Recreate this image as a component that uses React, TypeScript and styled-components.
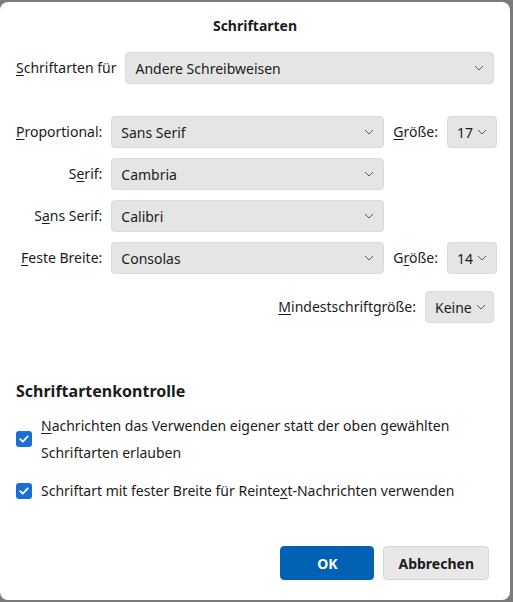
import * as React from 'react';
import styled, { createGlobalStyle } from 'styled-components';

const GlobalStyle = createGlobalStyle`
	html, body {
		margin: 0;
		padding: 0;
		background: #7b7b7b;
	}
	body {
		font-family: 'Noto Sans', 'Open Sans', sans-serif;
		color: #1b1b1b;
	}
`;

let Dialog = styled.div`
	box-sizing: border-box;
	width: 510px;
	height: 598px;
	margin: 2px 3px 2px 0;
	background: #ffffff;
	border-radius: 8px;
	padding: 0 16px 0 16px;
	display: flex;
	flex-direction: column;
	font-size: 14px;
`;
let Title = styled.h1`
	margin: 0;
	padding: 14px 0 0;
	height: 38px;
	box-sizing: border-box;
	text-align: center;
	font-size: 14px;
	font-weight: 700;
	line-height: 20px;
`;
let TopRow = styled.div`
	margin-top: 12px;
	display: flex;
	align-items: center;
	gap: 9px;
`;
let FontGrid = styled.div`
	margin-top: 32px;
	display: grid;
	grid-template-columns: auto 273px auto 1fr;
	column-gap: 9px;
	row-gap: 10px;
	align-items: center;
`;
let Label = styled.label<{ $right?: boolean }>`
	white-space: nowrap;
	text-align: ${(p) => (p.$right ? 'right' : 'left')};
	line-height: 20px;
	& u {
		text-decoration-thickness: 1px;
		text-underline-offset: 2px;
	}
`;
let Select = styled.div<{ $width?: number; $grow?: boolean }>`
	box-sizing: border-box;
	height: 32px;
	${(p) => (p.$width ? `width: ${p.$width}px;` : '')}
	${(p) => (p.$grow ? 'flex: 1;' : '')}
	background: #e5e5e5;
	border: 1px solid #dadada;
	border-radius: 4px;
	display: flex;
	align-items: center;
	justify-content: space-between;
	padding: 0 9px 0 9px;
	white-space: nowrap;
	& svg {
		flex-shrink: 0;
		margin-left: 4px;
	}
`;
let MinRow = styled.div`
	margin-top: 17px;
	display: flex;
	justify-content: flex-end;
	align-items: center;
	gap: 9px;
`;
let Heading = styled.h2`
	margin: 57px 0 0;
	font-size: 16px;
	font-weight: 700;
	line-height: 22px;
`;
let CheckRow = styled.div`
	margin-top: 10px;
	display: flex;
	align-items: center;
	gap: 9px;
	& ${Label} {
		line-height: 27px;
	}
	& + & {
		margin-top: 11px;
	}
`;
let Box = styled.span`
	flex-shrink: 0;
	width: 16px;
	height: 16px;
	border-radius: 3px;
	background: #1a6fd6;
	display: flex;
	align-items: center;
	justify-content: center;
`;
let Footer = styled.div`
	margin-top: auto;
	margin-bottom: 20px;
	display: flex;
	justify-content: flex-end;
	gap: 9px;
	padding-right: 5px;
`;
let Button = styled.button<{ $primary?: boolean }>`
	box-sizing: border-box;
	height: 34px;
	min-width: 94px;
	padding: 0 14px;
	border-radius: 4px;
	font-family: inherit;
	font-size: 14px;
	font-weight: 700;
	border: 1px solid ${(p) => (p.$primary ? '#0061b5' : '#d3d3d3')};
	background: ${(p) => (p.$primary ? '#0061b5' : '#e8e8e8')};
	color: ${(p) => (p.$primary ? '#ffffff' : '#1b1b1b')};
`;

const Chevron = () => (
	<svg width="10" height="6" viewBox="0 0 10 6">
		<path d="M1 1 L5 5 L9 1" fill="none" stroke="#5b5b5b" strokeWidth="1" />
	</svg>
);

const Check = () => (
	<svg width="12" height="12" viewBox="0 0 12 12">
		<path
			d="M2.2 6.2 L4.8 8.7 L9.8 3.4"
			fill="none"
			stroke="#ffffff"
			strokeWidth="1.8"
			strokeLinecap="round"
			strokeLinejoin="round"
		/>
	</svg>
);

const FontSelect: React.FunctionComponent<{
	value: string;
	width?: number;
	grow?: boolean;
}> = ({ value, width, grow }) => (
	<Select $width={width} $grow={grow}>
		<span>{value}</span>
		<Chevron />
	</Select>
);

const App: React.FunctionComponent = () => {
	return (
		<>
			<GlobalStyle />
			<Dialog>
				<Title>Schriftarten</Title>
				<TopRow>
					<Label>
						<u>S</u>chriftarten für
					</Label>
					<FontSelect value="Andere Schreibweisen" grow />
				</TopRow>

				<FontGrid>
					<Label $right>
						<u>P</u>roportional:
					</Label>
					<FontSelect value="Sans Serif" />
					<Label>
						<u>G</u>röße:
					</Label>
					<FontSelect value="17" />

					<Label $right>
						S<u>e</u>rif:
					</Label>
					<FontSelect value="Cambria" />
					<span />
					<span />

					<Label $right>
						S<u>a</u>ns Serif:
					</Label>
					<FontSelect value="Calibri" />
					<span />
					<span />

					<Label $right>
						<u>F</u>este Breite:
					</Label>
					<FontSelect value="Consolas" />
					<Label>
						G<u>r</u>öße:
					</Label>
					<FontSelect value="14" />
				</FontGrid>

				<MinRow>
					<Label>
						<u>M</u>indestschriftgröße:
					</Label>
					<FontSelect value="Keine" width={69} />
				</MinRow>

				<Heading>Schriftartenkontrolle</Heading>
				<CheckRow>
					<Box>
						<Check />
					</Box>
					<Label>
						<u>N</u>achrichten das Verwenden eigener statt der oben gewählten
						<br />
						Schriftarten erlauben
					</Label>
				</CheckRow>
				<CheckRow>
					<Box>
						<Check />
					</Box>
					<Label>
						Schriftart mit fester Breite für Reinte<u>x</u>t-Nachrichten verwenden
					</Label>
				</CheckRow>

				<Footer>
					<Button $primary>OK</Button>
					<Button>Abbrechen</Button>
				</Footer>
			</Dialog>
		</>
	);
};

export default App;
